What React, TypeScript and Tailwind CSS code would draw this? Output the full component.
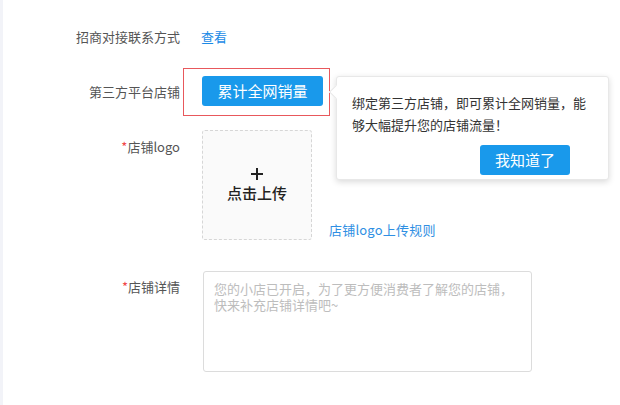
import React from 'react';

const font = { fontFamily: '"Noto Sans CJK SC", "Noto Sans", sans-serif' };

function Label({ text, required }: { text: string; required?: boolean }) {
  return (
    <div className="w-[180px] shrink-0 text-right text-[13px] text-[#555]">
      {required && <span className="text-[#f04848]">*</span>}
      {text}
    </div>
  );
}

export default function App() {
  return (
    <div style={font} className="relative w-[620px] h-[405px] bg-white flex overflow-hidden">
      <div className="w-[3px] h-full bg-[#f2f3f8]" />
      <div className="flex flex-col -ml-[3px]">
        <div className="flex items-center h-[30px] mt-[22px]">
          <Label text="招商对接联系方式" />
          <a className="ml-[21px] text-[13px] text-[#1a8ae6]">查看</a>
        </div>

        <div className="flex items-center mt-[16px]">
          <Label text="第三方平台店铺" />
          <div className="ml-[3px] border border-[#e8585c] pl-[18px] pr-[6px] pt-[7px] pb-[9px]">
            <button className="w-[121px] h-[30px] rounded-[3px] bg-[#1999eb] text-white text-[15px]">
              累计全网销量
            </button>
          </div>
        </div>

        <div className="flex mt-[14px]">
          <div className="pt-[7px]">
            <Label text="店铺logo" required />
          </div>
          <div className="ml-[22px] w-[110px] h-[110px] rounded-[3px] border border-dashed border-[#d6d6d6] bg-[#fafafa] flex flex-col items-center justify-center">
            <svg width="12" height="12" viewBox="0 0 12 12">
              <path d="M6 0v12M0 6h12" stroke="#222" strokeWidth="2" />
            </svg>
            <span className="mt-[4px] text-[15px] leading-[18px] text-[#222] font-medium">点击上传</span>
          </div>
          <a className="self-end mb-[1px] ml-[17px] text-[13px] tracking-[0.2px] text-[#2f8fe3]">店铺logo上传规则</a>
        </div>

        <div className="flex mt-[31px]">
          <div className="pt-[6px]">
            <Label text="店铺详情" required />
          </div>
          <div className="ml-[23px] w-[329px] h-[101px] rounded-[3px] border border-[#dcdcdc] px-[10px] pt-[9px] text-[13px] leading-[16px] text-[#bdbdbd]">
            您的小店已开启，为了更方便消费者了解您的店铺，快来补充店铺详情吧~
          </div>
        </div>
      </div>

      <div className="absolute left-[336px] top-[76px] w-[273px] h-[104px] bg-white rounded-[3px] border border-[#e8e8e8] shadow-[0_2px_6px_rgba(0,0,0,0.15)]">
        <div className="absolute -left-[6px] top-[10px] w-[10px] h-[10px] rotate-45 bg-white border-l border-b border-[#e8e8e8]" />
        <div className="pl-[15px] pr-[14px] pt-[15px] text-[13px] leading-[22px] text-[#333]">
          绑定第三方店铺，即可累计全网销量，能够大幅提升您的店铺流量！
        </div>
        <div className="flex justify-end pr-[38px] mt-[9px]">
          <button className="w-[90px] h-[30px] rounded-[3px] bg-[#1999eb] text-white text-[15px]">我知道了</button>
        </div>
      </div>
    </div>
  );
}
